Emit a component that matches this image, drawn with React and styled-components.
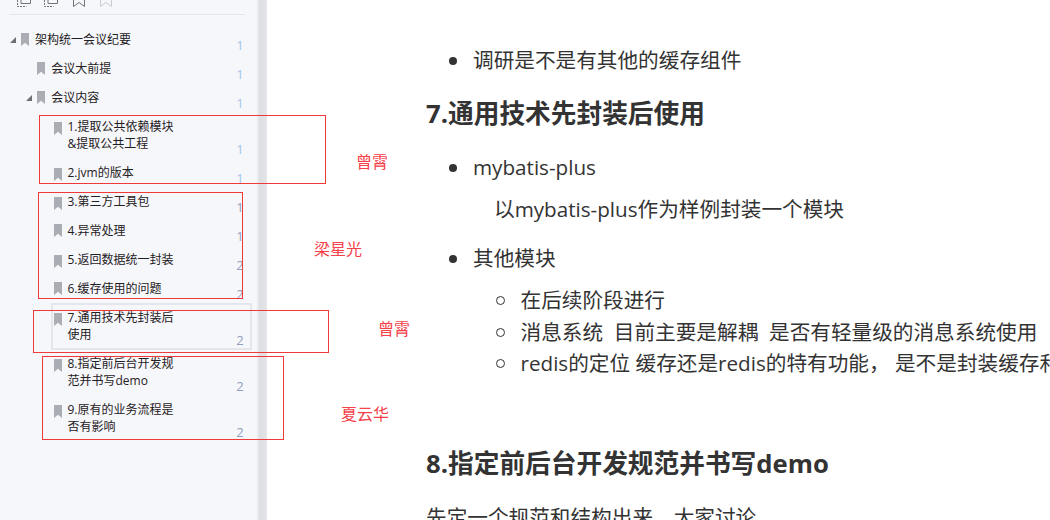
import React from "react";
import styled, { createGlobalStyle } from "styled-components";

const Global = createGlobalStyle`
  html, body { margin: 0; padding: 0; background: #fff; }
  #root { width: 1050px; height: 520px; overflow: hidden; }
`;

const FONT = `"Open Sans", "Noto Sans CJK SC", sans-serif`;

const Page = styled.div`
  position: relative;
  display: flex;
  width: 1050px;
  height: 520px;
  overflow: hidden;
  font-family: ${FONT};
  background: #fff;
`;

const Sidebar = styled.aside`
  flex: 0 0 257px;
  background: #f6f7fa;
  display: flex;
  flex-direction: column;
`;

const Gutter = styled.div`
  flex: 0 0 10px;
  box-sizing: border-box;
  border-left: 2px solid #e8e9ee;
  background: linear-gradient(to right, #dedfe3, #e1e2e5 70%, #e6e7e9);
`;

const Toolbar = styled.div`
  height: 14px;
  margin: 0 12px 0 9px;
  border-bottom: 1px solid #e4e6eb;
  display: flex;
  align-items: flex-start;
  padding-left: 8px;
  gap: 13px;
`;

const TreeList = styled.div`
  padding-top: 10px;
  display: flex;
  flex-direction: column;
`;

const Row = styled.div`
  display: flex;
  align-items: flex-start;
  box-sizing: border-box;
  padding-top: 6px;
  padding-left: ${(p) => 10 + p.$level * 16.25}px;
`;

const Caret = styled.svg`
  flex: 0 0 6px;
  width: 6px;
  height: 6px;
  margin-top: 6px;
  margin-right: 5px;
  visibility: ${(p) => (p.$hidden ? "hidden" : "visible")};
`;

const Mark = styled.svg`
  flex: 0 0 8px;
  width: 8px;
  height: 13px;
  margin-top: ${(p) => (p.$drop ? 4 : 2)}px;
  margin-right: 6px;
`;

const Label = styled.div`
  width: 110px;
  font-size: 12px;
  line-height: 17px;
  color: #1f2023;
  padding-bottom: 6px;
`;

const Count = styled.div`
  margin-left: auto;
  margin-right: 11px;
  width: 12px;
  text-align: center;
  align-self: flex-end;
  font-size: 13px;
  line-height: 17px;
  color: ${(p) => (p.$bright ? "#a3c6ea" : "#8fa0bd")};
`;

const Selection = styled.div`
  position: absolute;
  left: 51px;
  top: 303px;
  width: 197px;
  height: 43px;
  border: 2px solid #e4e6ec;
  pointer-events: none;
`;

const Main = styled.main`
  flex: 1;
  min-width: 0;
  overflow: hidden;
  padding: 45px 0 0 159px;
  color: #333;
  font-size: 20.65px;
  line-height: 31.5px;
  white-space: nowrap;
`;

const Bullets = styled.ul`
  list-style: none;
  margin: 0 0 ${(p) => p.$after}px;
  padding: 0 0 0 47px;
`;

const Item = styled.li`
  position: relative;
  margin-bottom: ${(p) => p.$gap || 0}px;
  &::before {
    content: "";
    position: absolute;
    left: -24px;
    top: 12px;
    width: 8px;
    height: 8px;
    border-radius: 50%;
    background: #333;
  }
`;

const SubItem = styled.li`
  position: relative;
  &::before {
    content: "";
    position: absolute;
    left: -25px;
    top: 11px;
    width: 7px;
    height: 7px;
    border: 1.5px solid #333;
    border-radius: 50%;
  }
`;

const ItemNote = styled.p`
  margin: 11px 0 0 21px;
`;

const Circles = styled.ul`
  list-style: none;
  margin: 11px 0 0;
  padding-left: 47.5px;
`;

const Heading = styled.h2`
  margin: 0 0 18px;
  font-size: 25.7px;
  line-height: 40px;
  font-weight: 700;
  color: #333;
`;

const Para = styled.p`
  margin: 0;
`;

const Box = styled.div`
  position: absolute;
  left: ${(p) => p.$x}px;
  top: ${(p) => p.$y}px;
  width: ${(p) => p.$w}px;
  height: ${(p) => p.$h}px;
  border: 1px solid #f03a3a;
  pointer-events: none;
`;

const Note = styled.div`
  position: absolute;
  left: ${(p) => p.$x}px;
  top: ${(p) => p.$y}px;
  font-size: 16px;
  line-height: 22px;
  color: #f5424a;
  white-space: nowrap;
`;

const ToolIcon = ({ kind }) => {
  if (kind === "outline") {
    return (
      <svg width="14" height="7" viewBox="0 0 14 7" fill="none" style={{ flex: "0 0 14px" }}>
        <path d="M0.5 0v6.5h9" stroke="#70737a" strokeDasharray="2 1" />
        <path d="M4 0v3.5h9.5V0" stroke="#70737a" />
      </svg>
    );
  }
  const c = kind === "dim" ? "#c9cbd0" : "#70737a";
  return (
    <svg width="12" height="7" viewBox="0 0 12 7" fill="none" style={{ flex: "0 0 12px", marginLeft: 2 }}>
      <path d="M0.5 0v6.5L6 2.5l5.5 4V0" stroke={c} />
    </svg>
  );
};

const TreeRow = ({ level, caret, text, n, drop, bright }) => (
  <Row $level={level}>
    <Caret $hidden={!caret} viewBox="0 0 6 6"><path d="M6 0v6H0z" fill="#6d6f75" /></Caret>
    <Mark $drop={drop} viewBox="0 0 8 13"><path d="M0 0h8v13L4 9.8 0 13z" fill="#abadb4" /></Mark>
    <Label>{text}</Label>
    <Count $bright={bright}>{n}</Count>
  </Row>
);

const items = [
  { level: 0, caret: true, text: "架构统一会议纪要", n: "1", bright: true },
  { level: 1, text: "会议大前提", n: "1", bright: true },
  { level: 1, caret: true, text: "会议内容", n: "1", bright: true },
  { level: 2, drop: true, text: "1.提取公共依赖模块 &提取公共工程", n: "1", bright: true },
  { level: 2, drop: true, text: "2.jvm的版本", n: "1", bright: true },
  { level: 2, drop: true, text: "3.第三方工具包", n: "1" },
  { level: 2, text: "4.异常处理", n: "1" },
  { level: 2, drop: true, text: "5.返回数据统一封装", n: "2" },
  { level: 2, text: "6.缓存使用的问题", n: "2" },
  { level: 2, drop: true, text: "7.通用技术先封装后使用", n: "2" },
  { level: 2, drop: true, text: "8.指定前后台开发规范并书写demo", n: "2" },
  { level: 2, drop: true, text: "9.原有的业务流程是否有影响", n: "2" },
];

export default function App() {
  return (
    <Page>
      <Global />
      <Sidebar>
        <Toolbar>
          <ToolIcon kind="outline" />
          <ToolIcon kind="outline" />
          <ToolIcon kind="mark" />
          <ToolIcon kind="dim" />
        </Toolbar>
        <TreeList>
          {items.map((it) => (
            <TreeRow key={it.text} {...it} />
          ))}
        </TreeList>
      </Sidebar>
      <Gutter />
      <Main>
        <Bullets $after={17}>
          <Item>调研是不是有其他的缓存组件</Item>
        </Bullets>
        <Heading>7.通用技术先封装后使用</Heading>
        <Bullets $after={64}>
          <Item $gap={17}>
            mybatis-plus
            <ItemNote>以mybatis-plus作为样例封装一个模块</ItemNote>
          </Item>
          <Item>
            其他模块
            <Circles>
              <SubItem>在后续阶段进行</SubItem>
              <SubItem>消息系统&nbsp; 目前主要是解耦&nbsp; 是否有轻量级的消息系统使用</SubItem>
              <SubItem>redis的定位 缓存还是redis的特有功能， 是不是封装缓存和redis的特有功能</SubItem>
            </Circles>
          </Item>
        </Bullets>
        <Heading>8.指定前后台开发规范并书写demo</Heading>
        <Para>先定一个规范和结构出来，大家讨论</Para>
      </Main>

      <Selection />
      <Box $x={39} $y={115} $w={285} $h={67} />
      <Box $x={38} $y={192} $w={203} $h={105} />
      <Box $x={33} $y={310} $w={294} $h={41} />
      <Box $x={42} $y={356} $w={240} $h={82} />
      <Note $x={356} $y={151}>曾霄</Note>
      <Note $x={314} $y={238}>梁星光</Note>
      <Note $x={378} $y={318}>曾霄</Note>
      <Note $x={341} $y={403}>夏云华</Note>
    </Page>
  );
}
